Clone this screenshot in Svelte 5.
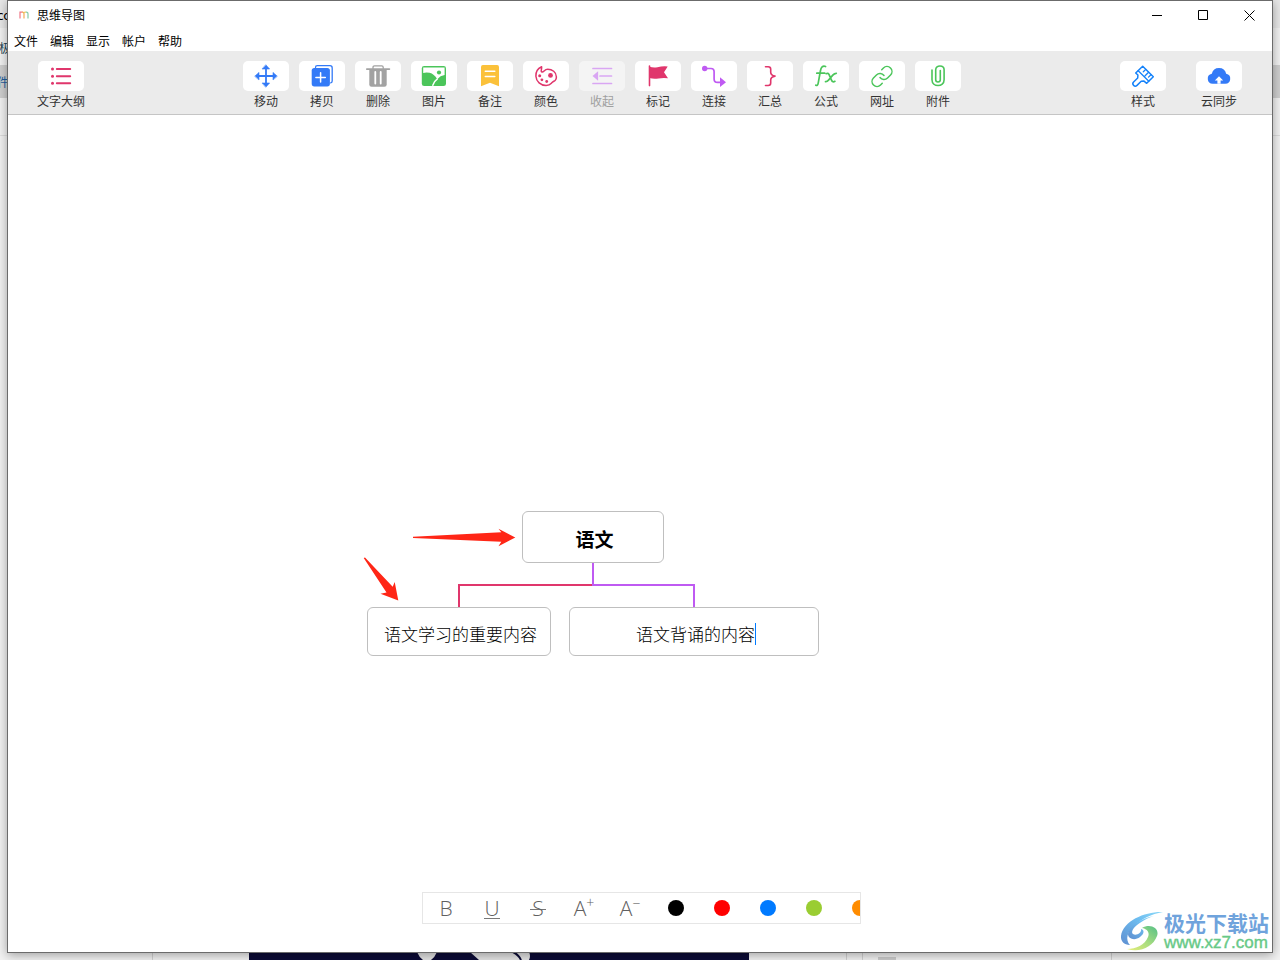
<script>
  const menus = ['文件', '编辑', '显示', '帐户', '帮助'];
  const left = [{ icon: 'outline', label: '文字大纲' }];
  const middle = [
    { icon: 'move', label: '移动' },
    { icon: 'copy', label: '拷贝' },
    { icon: 'trash', label: '删除' },
    { icon: 'picture', label: '图片' },
    { icon: 'note', label: '备注' },
    { icon: 'palette', label: '颜色' },
    { icon: 'collapse', label: '收起', disabled: true },
    { icon: 'flag', label: '标记' },
    { icon: 'connect', label: '连接' },
    { icon: 'brace', label: '汇总' },
    { icon: 'formula', label: '公式' },
    { icon: 'link', label: '网址' },
    { icon: 'clip', label: '附件' }
  ];
  const right = [
    { icon: 'brush', label: '样式' },
    { icon: 'cloud', label: '云同步' }
  ];
  const colors = ['#000000', '#ff0000', '#007aff', '#9acd32', '#ff8c00'];
  let draft = $state('语文背诵的内容');
</script>

{#snippet icon(name)}
  <svg class="icon" viewBox="0 0 46 30" fill="none" stroke-linecap="round" stroke-linejoin="round" aria-hidden="true">
    {#if name === 'outline'}
      <g stroke="#e0366c" stroke-width="2"><path d="M18.8 8h13.4M18.8 15.3h13.4M18.8 22.3h13.4" /></g>
      <g fill="#e0366c"><circle cx="14.5" cy="8" r="1.5" /><circle cx="14.5" cy="15.3" r="1.5" /><circle cx="14.5" cy="22.3" r="1.5" /></g>
    {:else if name === 'move'}
      <path d="M23 6v18M14 15h18" stroke="#337af7" stroke-width="1.8" />
      <path d="M23 4l3.6 4h-7.2zM23 26l3.6-4h-7.2zM12 15l4-3.6v7.2zM34 15l-4-3.6v7.2z" fill="#337af7" stroke="#337af7" stroke-width=".6" />
    {:else if name === 'copy'}
      <path d="M16.5 6.5Q16.5 4.7 18.3 4.7H31Q33.2 4.7 33.2 6.9V20Q33.2 21.6 31.7 21.8" stroke="#337af7" stroke-width="1.3" />
      <rect x="12.7" y="7" width="18.2" height="18.4" rx="2.6" fill="#337af7" />
      <path d="M21.6 11.7v9.4M16.9 16.4h9.4" stroke="#fff" stroke-width="1.5" />
    {:else if name === 'trash'}
      <path d="M18 7.5V6.3Q18 4.8 19.5 4.8H26.7Q28.2 4.8 28.2 6.3V7.5" stroke="#a2a2a2" stroke-width="1.3" />
      <path d="M11.8 8.1h22.6" stroke="#a2a2a2" stroke-width="1.7" />
      <path d="M14.3 8.5h17.4v15q0 2.3-2.3 2.3H16.6q-2.3 0-2.3-2.3z" fill="#a2a2a2" />
      <path d="M20.3 11v11.5M25.7 11v11.5" stroke="#fff" stroke-width="1.8" />
    {:else if name === 'picture'}
      <rect x="10.8" y="5" width="24.2" height="20.1" rx="2.4" fill="#4bc55a" />
      <path d="M12.2 6.400h21.400v7.700q-4.400.6-7.300 4.100-3.200-5.400-7.700-6.500-3.700-.7-6.400.2z" fill="#fff" />
      <path d="M21.800 24.200q1.300-4 4.400-6" stroke="#fff" stroke-width="1.500" />
      <circle cx="28" cy="11.500" r="2.100" fill="#4bc55a" />
    {:else if name === 'note'}
      <path d="M14 6q0-1.900 1.900-1.900h14.200Q32 4.100 32 6v19.300l-9-3.500-9 3.500z" fill="#fbc13a" />
      <path d="M18.300 10.300h9.500M18.300 15.500h9.500" stroke="#fff" stroke-width="1.500" />
    {:else if name === 'palette'}
      <path d="M18.600 5.700C14.700 7.500 12.600 11 12.900 15.300c.4 5.400 4.700 9.200 10.200 9.200 4.200 0 4.600-1.600 6-3 1.200-1.200 2.500-1.400 3.300-2.400.8-1 1-2.200 1-3.200 0-4.900-4.300-7.600-8.700-7.600-3.200 0-3.800 2.900-5.500 2.700-2-.3-.2-2.500-.6-5.300z" stroke="#e0366c" stroke-width="1.500" />
      <g fill="#e0366c"><circle cx="16.700" cy="14.700" r="1.500" /><circle cx="18.900" cy="18.800" r="1.400" /><circle cx="23.700" cy="20.500" r="1.400" /><circle cx="27.500" cy="14.400" r="2.400" /></g>
    {:else if name === 'collapse'}
      <path d="M14 7.500h18.500M21 15h11.500M14 22.500h18.500" stroke="#d9a6f3" stroke-width="1.700" />
      <path d="M13.500 15l5.600-4.800v9.600z" fill="#d9a6f3" />
    {:else if name === 'flag'}
      <path d="M14.500 5v19.600" stroke="#e0366c" stroke-width="1.600" />
      <path d="M14.500 5.800q4 1.200 8 .4 5-1.200 10.200-.7L29 11.300l4 6q-5-.6-9.500.2-5 .7-9-.4z" fill="#e0366c" />
    {:else if name === 'connect'}
      <path d="M14 7.500h6q3.100 0 3.100 3.100v7.300q0 3.500 3.500 3.500H30" stroke="#bf5af2" stroke-width="1.700" />
      <circle cx="13.700" cy="7.500" r="2.700" fill="#bf5af2" />
      <path d="M29 16.200l6 5-6 4.700z" fill="#bf5af2" />
    {:else if name === 'brace'}
      <path d="M18.500 5.700h2.700q2.500 0 2.500 2.500v3q0 3.100 4.300 3.900-4.300.8-4.300 3.900v3q0 2.500-2.500 2.500h-2.700" stroke="#e0366c" stroke-width="1.600" />
    {:else if name === 'formula'}
      <path d="M22.600 5.500c-3-1.200-4.600 1-5.100 4l-2.300 12.600q-.5 3-2.400 2.100M13.800 12.200h8" stroke="#4bc55a" stroke-width="1.700" />
      <path d="M23 12.700q2.200-1.200 3.200 1.100l2.300 5.300q1.200 2.800 3.400 1.200M33.300 12.300q-1.800-.1-3.500 1.800l-4.300 5q-1.400 1.700-3 1.500" stroke="#4bc55a" stroke-width="1.700" />
    {:else if name === 'link'}
      <path transform="translate(11 3.500)" d="M10 13a5 5 0 0 0 7.540.54l3-3a5 5 0 0 0-7.070-7.070l-1.720 1.710M14 11a5 5 0 0 0-7.540-.54l-3 3a5 5 0 0 0 7.070 7.070l1.710-1.710" stroke="#4bc55a" stroke-width="1.500" />
    {:else if name === 'clip'}
      <path d="M17 9v9.700c0 7.700 12.100 7.700 12.100 0V8.800c0-5-8.400-5-8.400 0v10c0 3 4.600 3 4.600 0V9.500" stroke="#4bc55a" stroke-width="1.600" />
    {:else if name === 'brush'}
      <path d="M22.700 5.300L33.300 15.700 26.700 22.300 24 20.100 21.200 20.300 17 24.400C14.700 26.500 11.400 23.300 13.600 21L17.700 17 17.900 14 15.700 12z" stroke="#1482fa" stroke-width="1.500" />
      <path d="M18.200 9.800L28.800 20.200M25.800 8.400l-2.500 2.400M28.600 11.300l-3.500 3.400M31 13.700l-2.500 2.400" stroke="#1482fa" stroke-width="1.300" />
    {:else if name === 'cloud'}
      <path d="M16.700 22.700a5 5 0 0 1-.9-9.900 7.400 7.400 0 0 1 14.400 0 5 5 0 0 1-.9 9.900z" fill="#337af7" />
      <path d="M23 15.200l4.200 4.200h-2.600v3.400h-3.200v-3.400h-2.600z" fill="#fff" />
    {/if}
  </svg>
{/snippet}

{#snippet tools(list)}
  {#each list as t}
    <button class="tool" disabled={t.disabled}>
      <span class="tile">{@render icon(t.icon)}</span>
      <span class="label">{t.label}</span>
    </button>
  {/each}
{/snippet}

<div class="desktop">
  <div class="behind" aria-hidden="true">
    <div class="strip top"></div>
    <div class="strip tab"></div>
    <div class="strip page"></div>
    <span class="peek first">co</span>
    <span class="peek second">极</span>
    <span class="peek third">件</span>
    <svg class="photo" viewBox="0 0 500 8">
      <path fill="#0c0b36" d="M0 0h500v8H0z" />
      <path fill="#e4e4e4" d="M168 0h20q-2 5-6 8h-8q-4-3-6-8zM221 0h59q2 4 0 8h-50z" />
      <path d="M264 0q6 3 8 8" fill="none" stroke="#0c0b36" stroke-width="2" />
    </svg>
    <i class="rule a"></i><i class="rule b"></i><i class="rule c"></i><i class="rule d"></i>
    <i class="chip"></i>
  </div>

  <main class="window">
    <header class="titlebar">
      <svg class="app-logo" viewBox="0 0 10 8" fill="none" stroke-width="1.200">
        <path d="M1 7.500V1.200h2.500" stroke="#ee7787" /><path d="M3 1.200Q5 .8 5 3v4.500" stroke="#f5aa55" /><path d="M5 2Q5.500 1 7 1.200" stroke="#e5ce6a" /><path d="M7 1.200Q9 1 9 3v4.500" stroke="#83cba8" />
      </svg>
      <h1>思维导图</h1>
      <div class="controls">
        <button aria-label="最小化"><svg viewBox="0 0 11 11"><path d="M0 5.500h10" /></svg></button>
        <button aria-label="最大化"><svg viewBox="0 0 11 11"><path d="M.5.5h9v9h-9z" /></svg></button>
        <button aria-label="关闭"><svg viewBox="0 0 11 11"><path d="M.5.5l10 10M10.500.5l-10 10" /></svg></button>
      </div>
    </header>
    <nav class="menu">
      {#each menus as m}<button>{m}</button>{/each}
    </nav>
    <div class="toolbar">
      <div class="group">{@render tools(left)}</div>
      <div class="group">{@render tools(middle)}</div>
      <div class="group wide">{@render tools(right)}</div>
    </div>

    <section class="canvas">
      <div class="diagram">
        <svg class="lines" viewBox="0 0 460 150" fill="none" aria-hidden="true">
          <path d="M230 78H96v22" stroke="#e0366c" stroke-width="2" />
          <path d="M230 56v22h101v22" stroke="#bf5af2" stroke-width="2" />
          <path fill="#ff2616" d="M50 29.800L138.300 25.300 135.500 21.700 152.300 30.500 135.500 39.300 138.300 34.700 50 31Z" />
          <path fill="#ff2616" d="M.7 51L2 50.600 29.700 79.700 31.700 75 35.300 93.500 17.500 86.700 23.500 85.500Z" />
        </svg>
        <div class="node root">语文</div>
        <div class="node one">语文学习的重要内容</div>
        <div class="node two">
          <input aria-label="节点内容" bind:value={draft} style:width="{draft.length}em" /><span class="caret"></span>
        </div>
      </div>

      <div class="format">
        <button aria-label="加粗">B</button>
        <button aria-label="下划线" class="under"><span>U</span></button>
        <button aria-label="删除线" class="strike"><span>S</span></button>
        <button aria-label="增大字号">A<sup>+</sup></button>
        <button aria-label="减小字号">A<sup>−</sup></button>
        {#each colors as c}
          <button aria-label={c}><i class="dot" style:background={c}></i></button>
        {/each}
      </div>

      <div class="watermark">
        <svg viewBox="0 0 44 40" aria-hidden="true">
          <defs>
            <linearGradient id="sky" x1="0" y1="1" x2="1" y2="0"><stop offset="0" stop-color="#5f8fd0" /><stop offset=".6" stop-color="#6dbdf0" /><stop offset="1" stop-color="#8edaf8" /></linearGradient>
            <linearGradient id="leaf" x1="0" y1="1" x2="1" y2="0"><stop offset="0" stop-color="#e8ee78" /><stop offset=".5" stop-color="#a6dc80" /><stop offset="1" stop-color="#54bf86" /></linearGradient>
          </defs>
          <path fill="url(#sky)" d="M43 1C27 0 3 9 1 25c-.5 5 3 9 9 9-5-5-3-14 5-20C22 8 31 3 43 1z" />
          <path fill="url(#sky)" d="M34 5C22 7 9 15 8 23c0 5 7 7 12 3 4-3 5-7 1-8 1 4-5 7-8 5-4-4 8-14 21-18z" />
          <path fill="url(#leaf)" d="M22 17c8-5 18 0 15 8C33 36 20 42 7 38c9 0 18-4 21-12 2-5-1-8-6-9z" />
        </svg>
        <div><strong>极光下载站</strong><span>www.xz7.com</span></div>
      </div>
    </section>
  </main>
</div>

<style>
  :global(body) {
    margin: 0;
    font-family: "Noto Sans CJK SC", sans-serif;
    font-size: 12px;
    color: #000;
  }
  * { box-sizing: border-box; }
  button {
    border: 0;
    padding: 0;
    background: none;
    font: inherit;
    color: inherit;
  }
  .desktop {
    position: relative;
    display: flex;
    min-height: 100vh;
    padding: 0 7px 7px;
    background: #f2f2f2;
    overflow: hidden;
  }
  .behind { position: absolute; inset: 0; }
  .strip { position: absolute; left: 0; right: 0; }
  .top { top: 0; height: 28px; background: #e8e8e8; }
  .tab { top: 65px; height: 33px; background: #cfcfcf; }
  .page { top: 135px; height: 1px; background: #dcdcdc; }
  .peek { position: absolute; left: 0; white-space: nowrap; }
  .first { top: 5px; left: -3px; font-size: 13px; }
  .second { top: 39px; left: -1px; color: #245; }
  .third { top: 73px; left: -3px; color: #1e5f9e; }
  .photo { position: absolute; left: 249px; bottom: 0; width: 500px; height: 8px; }
  .rule { position: absolute; bottom: 0; width: 1px; height: 7px; background: #d2d2d2; }
  .a { left: 152px; }
  .b { left: 846px; }
  .c { left: 862px; }
  .d { left: 1111px; }
  .chip { position: absolute; left: 878px; bottom: 0; width: 18px; height: 3px; background: #ccc; }

  .window {
    position: relative;
    display: flex;
    flex: 1;
    flex-direction: column;
    min-width: 0;
    border: 1px solid #6b6b6b;
    background: #fff;
    box-shadow: 0 2px 10px rgba(0, 0, 0, .35);
  }
  .titlebar { display: flex; align-items: center; height: 30px; padding: 0 0 2px 11px; }
  .app-logo { width: 10px; height: 8px; }
  h1 { margin: 0 0 0 8px; font-size: 12px; font-weight: 400; line-height: 20px; }
  .controls { display: flex; margin-left: auto; }
  .controls button { display: grid; place-items: center; width: 46px; height: 28px; }
  .controls svg { width: 11px; height: 11px; fill: none; stroke: #000; }
  .menu { display: flex; gap: 12px; height: 20px; padding-left: 6px; line-height: 20px; }

  .toolbar {
    display: flex;
    justify-content: space-between;
    height: 64px;
    padding: 10px 30px 0;
    border-bottom: 1px solid #c5c5c5;
    background: #ebebeb;
  }
  .group { display: flex; gap: 10px; }
  .wide { gap: 30px; }
  .tool {
    display: flex;
    flex-direction: column;
    align-items: center;
    width: 46px;
    color: #333;
    white-space: nowrap;
  }
  .tile { width: 46px; height: 30px; border-radius: 5px; background: #fff; }
  .icon { display: block; width: 46px; height: 30px; }
  .label { line-height: 20px; }
  .tool:disabled { color: #a0a0a0; }
  .tool:disabled .tile { background: #f4f4f4; }

  .canvas {
    position: relative;
    display: flex;
    flex: 1;
    flex-direction: column;
    align-items: center;
    justify-content: flex-end;
    padding: 0 0 28px 3px;
  }
  .diagram { position: absolute; left: 355px; top: 392px; width: 460px; height: 150px; }
  .lines { position: absolute; inset: 0; width: 460px; height: 150px; }
  .node {
    position: absolute;
    display: flex;
    align-items: center;
    justify-content: center;
    border: 1px solid #bfbfbf;
    border-radius: 6px;
    background: #fff;
    font-size: 17px;
    font-weight: 300;
    white-space: nowrap;
  }
  .root { left: 159px; top: 4px; width: 142px; height: 52px; padding: 2px 0 0 3px; font-size: 19px; font-weight: 700; }
  .one { left: 4px; top: 100px; width: 184px; height: 49px; padding: 4px 0 0 3px; }
  .two { left: 206px; top: 100px; width: 250px; height: 49px; padding: 4px 0 0 4px; }
  .two input { height: 26px; padding: 0; border: 0; outline: 0; background: none; font: inherit; color: inherit; }
  .caret { flex: none; width: 1px; height: 22px; background: #007aff; }

  .format {
    display: flex;
    width: 439px;
    height: 32px;
    border: 1px solid #e6e6e6;
    overflow: hidden;
    color: #606060;
    font: 300 21px/30px "Open Sans", "Noto Sans", sans-serif;
  }
  .format button { display: flex; flex: none; align-items: center; justify-content: center; width: 46px; height: 30px; }
  .format span { line-height: 20px; }
  .under span { border-bottom: 1px solid #777; }
  .strike span { padding: 0 2px; background: linear-gradient(#777, #777) 0 11px / 100% 1px no-repeat; }
  .format sup { align-self: flex-start; font-size: 14px; line-height: 20px; }
  .dot { width: 16px; height: 16px; border-radius: 50%; }

  .watermark { position: absolute; right: 3px; bottom: 0; display: flex; align-items: center; }
  .watermark svg { width: 44px; height: 40px; }
  .watermark div { display: flex; flex-direction: column; }
  .watermark strong { color: #6fa3dc; font-size: 21px; font-weight: 700; line-height: 24px; }
  .watermark span { color: #67c987; font: 17px/18px "Liberation Sans", sans-serif; -webkit-text-stroke: 0.4px #67c987; }
</style>
